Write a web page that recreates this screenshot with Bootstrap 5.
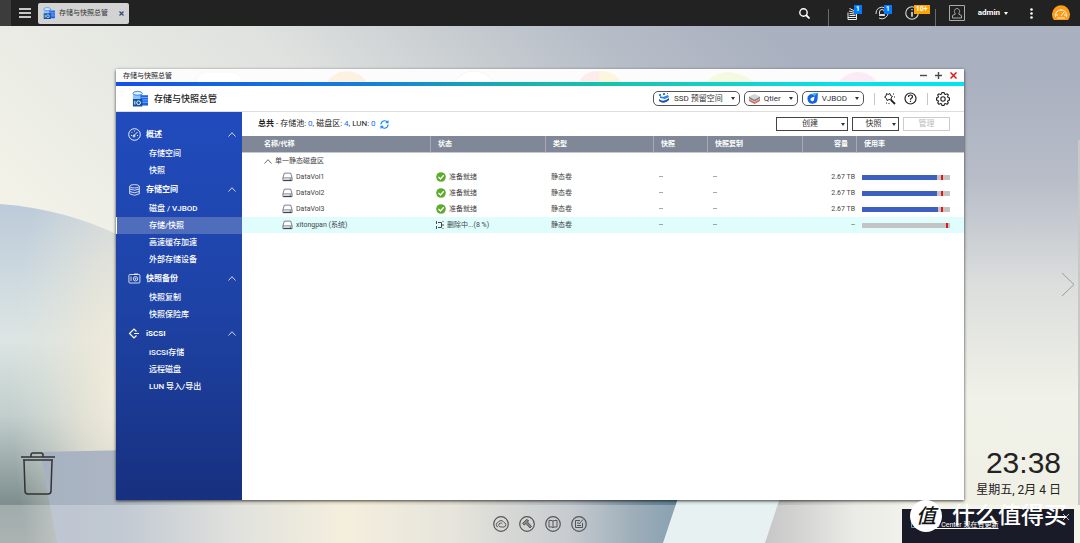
<!DOCTYPE html>
<html lang="zh-CN">
<head>
<meta charset="utf-8">
<meta name="viewport" content="width=device-width, initial-scale=1">
<title>存储与快照总管</title>
<link href="https://cdn.jsdelivr.net/npm/bootstrap@5.3.0/dist/css/bootstrap.min.css" rel="stylesheet">
<style>
body{font-family:Roboto,"Noto Sans CJK SC",sans-serif;font-size:8px;line-height:12px;color:#222;min-height:100vh;background:#f1f1e7;overflow:hidden}
a{color:inherit;text-decoration:none}
svg{display:block;flex:none}
.plain{border:0;background:none;padding:0;color:inherit;font-size:inherit;line-height:inherit}
.fs-s{font-size:7px}
.wall{inset:0;width:100%;height:100%}
.topbar{background:#222;height:26px;color:#fff;padding-right:4px}
.topedge{width:11px;background:#3c3c3c}
.burger{width:27px}
.task{width:91px;height:21px;background:#d3d3d3;color:#333;border-radius:2px;padding:0 5px}
.slot{width:30px;height:26px}
.vbar{width:1px;height:17px;background:#666a78}
.user{margin-left:13px;gap:13px}
.chip{top:5px;left:17px;font-size:7px;line-height:9px;padding:0 2px;background:#007bff;color:#fff;min-width:8px;font-weight:700}
.chip-warn{background:#ffa500}
.win{left:116px;right:116px;top:43px;bottom:43px;background:#fff;box-shadow:0 1px 3px rgba(0,0,0,.75)}
.titlebar{height:13px;padding:0 7px;font-size:7px}
.ribbon{height:4px;background:linear-gradient(90deg,#1450e8,#1680d8 30%,#18b8a8 50%,#18c8b0 62%,#08e0e8 85%,#00e4f4)}
.apphead{height:26px;padding:0 14px 0 16px;border-bottom:1px solid #ddd}
.apptitle{font-size:9px;font-weight:500;margin-left:6px}
.pill{height:15px;border:1px solid #555;border-radius:5px;background:#fff;padding:0 4px;color:#333}
.headrule{width:1px;height:12px;margin:0 8px 0 10px;background:#c8c8b8}
.caret{width:0;height:0;border:2px solid transparent;border-top:3px solid currentColor;border-bottom:0}
.side{width:126px;background:linear-gradient(#214bbd,#1e43a6 50%,#17307f);color:#fff;padding-top:12px;font-weight:500}
.sidehead{height:21px;padding:0 6px 0 12px;font-weight:700;gap:5px}
.sideitem{height:17px;padding-left:33px;line-height:17px}
.sideitem.active{background:#4f6dbb;border-left:1px solid #fff;padding-left:32px}
.tools{height:24px;padding:0 14px 0 16px}
.act{height:14px;border:1px solid #444;background:#fff;font-size:8px;line-height:12px;color:#333;padding:0 2px}
.act:disabled{border-color:#ccc;color:#bbb}
.w-create{width:72px}.w-snap{width:47px}
.grid{table-layout:fixed;width:100%;font-size:7px;line-height:12px;border-collapse:separate;border-spacing:0;color:#444}
.grid th{height:17px;background:#808797;color:#fff;font-weight:700;padding:0 7px;border-left:1px solid #a5aab6;border-bottom:1px solid #c5c8cf}
.grid th:first-child{border-left:0;padding-left:22px}
.grid td{height:16px;padding:0 6px}
.grid tr.sel td{background:#dffdfd}
.grid .num{text-align:right;padding-right:1px}
.grid th.num{padding-right:8px}
.grid td.namecell{padding-left:40px}
.gap-3px{gap:3px}
.c-state{width:115px}.c-type{width:108px}.c-snap{width:54px}.c-rep{width:95px}.c-use{width:108px}
.meter{width:88px;height:5px;background:#c4c4c4}
.meter-fill{height:5px;background:#3c5fc0}
.meter-mark{top:0;width:2px;height:5px;background:#f01010}
.dock{height:38px;background:rgba(255,255,255,.26);gap:10px;color:#555}
.trash{left:20px;bottom:46px}
.nextpage{right:5px;top:246px}
.clockbox{right:19px;bottom:43px;text-align:right;color:#222}
.clock{font:30px/34px "Liberation Sans",sans-serif}
.day{font-size:12px;line-height:20px}
.toastbox{right:6px;bottom:0;width:172px;height:34px;background:#1a1b29;color:#fff}
.toastline{left:9px;top:10px;font-size:7px}
.brandrow{left:8px;top:-9px;gap:10px}
.brandball{width:32px;height:32px;border-radius:50%;background:#fff;color:#151515;font-size:20px;line-height:32px;font-style:italic;font-weight:500}
.brandname{font-size:23px;line-height:30px;font-weight:500}
.scrolledge{right:0;top:114px;width:2px;bottom:38px;background:#c8c9c6}
</style>
</head>
<body class="d-flex flex-column position-relative">
<svg class="d-none">
  <symbol id="i-app" viewBox="0 0 17 17"><path d="M1 3v6l5 2 5-2V3z" fill="#8fc3ff"/><ellipse cx="6" cy="3" rx="5" ry="2" fill="#e8f4ff" stroke="#2a7cf0"/><path d="M9 5h8v11H9z" fill="#1d63e8"/><path d="M10 7.500h7M10 10h7M10 12.500h7" stroke="#7db1ff"/><path d="M1 9h10v8H1z" fill="#10529e"/><path d="M3 11v4" stroke="#fff"/><circle cx="7" cy="13" r="2" fill="none" stroke="#fff"/></symbol>
  <symbol id="i-up" viewBox="0 0 8 5"><path d="M.5 4.500 4 .7l3.500 3.800" fill="none" stroke="currentColor" stroke-width=".8"/></symbol>
  <symbol id="i-disk" viewBox="0 0 12 10"><path d="M1 6 2.500.8h7L11 6v3H1zM1 6h10" fill="#fff" stroke="#667" stroke-width=".9"/><path d="M1.500 8.700h9" stroke="#345" stroke-width="1.300"/><circle cx="9" cy="7.300" r=".6" fill="#345"/></symbol>
  <symbol id="i-ok" viewBox="0 0 10 10"><circle cx="5" cy="5" r="4.800" fill="#5cab2a"/><path d="m2.500 5 2 2 3.200-3.700" fill="none" stroke="#fff" stroke-width="1.400"/></symbol>
</svg>

<svg class="wall position-absolute z-n1" viewBox="0 0 1080 543" preserveAspectRatio="none" aria-hidden="true">
  <defs>
    <linearGradient id="sky" x1="0" y1=".35" x2=".68" y2="0"><stop offset="0" stop-color="#f2f2e8"/><stop offset=".45" stop-color="#dfe2df"/><stop offset=".8" stop-color="#b8bec8"/><stop offset="1" stop-color="#a9b0bf"/></linearGradient>
    <linearGradient id="rgt" x1="0" y1="0" x2="0" y2="1"><stop offset="0" stop-color="#a9b0bf"/><stop offset=".1" stop-color="#a9b0bf"/><stop offset=".3" stop-color="#b8bdc8"/><stop offset=".5" stop-color="#dcdedd"/><stop offset=".72" stop-color="#f0f1e8"/><stop offset="1" stop-color="#f0f0e4"/></linearGradient>
    <linearGradient id="arc" x1="0" y1="0" x2="0" y2="1"><stop offset="0" stop-color="#bccbda"/><stop offset=".4" stop-color="#dce5e3"/><stop offset=".62" stop-color="#c2cfcd"/><stop offset=".88" stop-color="#7f8f8f"/><stop offset="1" stop-color="#8f9898"/></linearGradient>
    <radialGradient id="glow" cx="1" cy=".55" r=".9"><stop offset="0" stop-color="#f3eddc"/><stop offset=".4" stop-color="#ece7d8" stop-opacity=".7"/><stop offset="1" stop-color="#e0e4dc" stop-opacity="0"/></radialGradient>
    <linearGradient id="base" x1="0" x2="1" y1="0" y2="0"><stop offset="0" stop-color="#a6b1c1"/><stop offset=".12" stop-color="#acb6c3"/><stop offset=".3" stop-color="#d7d8d2"/><stop offset=".46" stop-color="#f1e9d1"/><stop offset=".62" stop-color="#dfdcd0"/><stop offset=".8" stop-color="#b4bac0"/><stop offset=".9" stop-color="#7b92a1"/><stop offset="1" stop-color="#527890"/></linearGradient>
    <linearGradient id="fold" x1="0" x2="1" y1="0" y2="0"><stop offset="0" stop-color="#b2b3b3"/><stop offset=".6" stop-color="#e4e4df"/><stop offset="1" stop-color="#f0f0e6"/></linearGradient>
  </defs>
  <path d="M0 0h1080v543H0z" fill="url(#sky)"/>
  <path d="M915 26h165v517H915z" fill="url(#rgt)"/>
  <path d="M0 204Q65 209 120 236V543H0z" fill="url(#arc)"/>
  <path d="M0 204Q65 209 120 236V543H0z" fill="url(#glow)"/>
  <path d="M40 452 130 450 700 490 663 543H57z" fill="url(#base)"/>
  <path d="m678 498-15 45h102l15-45z" fill="#dfecec"/>
  <path d="m780 498-15 45h151v-45z" fill="url(#fold)"/>
</svg>

<header class="topbar d-flex align-items-center">
  <div class="topedge align-self-stretch"></div>
  <button class="plain burger d-flex justify-content-center" aria-label="主菜单"><svg width="12" height="10" viewBox="0 0 12 10"><path d="M0 1h12M0 5h12M0 9h12" stroke="#fff" stroke-width="1.300"/></svg></button>
  <button class="plain task fs-s d-flex align-items-center gap-1"><svg width="12" height="12"><use href="#i-app"/></svg><span>存储与快照总管</span><svg class="ms-auto" width="5" height="5" viewBox="0 0 5 5"><path d="m.5.5 4 4m0-4-4 4" stroke="#2c4d7c" stroke-width="1.200"/></svg></button>
  <button class="plain slot ms-auto d-flex align-items-center justify-content-center" aria-label="搜索"><svg width="11" height="11" viewBox="0 0 11 11"><circle cx="4.500" cy="4.500" r="3.700" fill="none" stroke="#fff" stroke-width="1.400"/><path d="m7 7 3.500 3.500" stroke="#fff" stroke-width="1.800"/></svg></button>
  <div class="vbar align-self-end ms-2 me-2"></div>
  <button class="plain slot position-relative d-flex align-items-center justify-content-center" aria-label="后台任务"><svg width="12" height="13" viewBox="0 0 12 13" fill="none" stroke="#eee"><path d="M2 5.500v7h8.500v-7M2 10.500h8.500M3.500 8.500h6M3.500 6.500l6 .5M3 4l6 1.500M3.500 1.500 9 4"/></svg><span class="chip position-absolute">1</span></button>
  <button class="plain slot position-relative d-flex align-items-center justify-content-center" aria-label="外部设备"><svg width="14" height="14" viewBox="0 0 14 14" fill="none" stroke="#ddd"><path d="M1 8a6 6 0 0 1 9-6M13 6a6 6 0 0 1-9 6M4.500 8.500V6a2.500 2.500 0 0 1 5 0v2.500zM4 9.500h6"/></svg><span class="chip position-absolute">1</span></button>
  <button class="plain slot position-relative d-flex align-items-center justify-content-center" aria-label="事件通知"><svg width="14" height="14" viewBox="0 0 13 13" fill="none" stroke="#ddd"><circle cx="6.500" cy="6.500" r="5.800"/><path d="M6.500 3v1M6.500 5.500v4.500" stroke-width="1.500"/></svg><span class="chip chip-warn position-absolute">10+</span></button>
  <div class="vbar align-self-end ms-2"></div>
  <button class="plain user d-flex align-items-center" aria-label="admin"><svg width="16" height="16" viewBox="0 0 16 16" fill="none" stroke="#aaa"><path d="M.5.5h15v15H.5z"/><path d="M3.500 13v-2.500l3-1.500C4.500 7 5.500 3.500 8 3.500S11.500 7 9.500 9l3 1.500V13z"/></svg><span class="d-flex align-items-center gap-1 fw-bold">admin<i class="caret"></i></span></button>
  <button class="plain slot ms-2 d-flex align-items-center justify-content-center" aria-label="更多"><svg width="3" height="11" viewBox="0 0 3 11" fill="#fff"><circle cx="1.500" cy="1.500" r="1.300"/><circle cx="1.500" cy="5.500" r="1.300"/><circle cx="1.500" cy="9.500" r="1.300"/></svg></button>
  <button class="plain slot d-flex align-items-center justify-content-center" aria-label="仪表板"><svg width="18" height="16" viewBox="0 0 18 16"><path d="M2 15a9 9 0 1 1 14 0z" fill="#ff9b17"/><path d="M3.500 12a5.700 5.700 0 1 1 11 0M9 11l3-4M9 4v2M5 6l1 1M4 10h2M12 10h2M5 13h8" fill="none" stroke="#fff" stroke-width=".9"/></svg></button>
</header>

<main class="flex-grow-1 position-relative d-flex flex-column">
  <div class="scrolledge position-absolute"></div>
  <button class="plain trash position-absolute" aria-label="回收站"><svg width="36" height="46" viewBox="0 0 36 46" fill="none" stroke="#333" stroke-width="1.500"><path d="M1 6h34M11 6V4q0-2 2-2h8q2 0 2 2v2M3 9h30M4 9l1 31q0 3 3 3h20q3 0 3-3l1-31"/></svg></button>
  <button class="plain nextpage position-absolute" aria-label="下一页"><svg width="14" height="25" viewBox="0 0 14 25"><path d="m1 1 12 11.500L1 24" fill="none" stroke="#9b9c9e"/></svg></button>

  <section class="win position-absolute d-flex flex-column">
    <div class="titlebar d-flex align-items-center position-relative">
      <svg class="position-absolute top-0 start-0 w-100 h-100" viewBox="0 0 848 13" preserveAspectRatio="xMidYMin slice" aria-hidden="true"><rect width="848" height="13" fill="#fcfcfc"/><rect x="80" y="3" width="46" height="30" rx="10" fill="#fff" stroke="#f8f8f8"/><circle cx="231" cy="25" r="23" fill="#fdf1e2"/><circle cx="358" cy="25" r="23" fill="#fff" stroke="#f6f6f6"/><path d="M463 13q5-11 20-11v11z" fill="#fcecec"/><path d="M483 2q16 0 22 11h-22z" fill="#fbf6de"/><path d="M590 13q20-20 48 0z" fill="#f4fae2"/><circle cx="742" cy="26" r="23" fill="#faebf6"/></svg>
      <span class="position-relative">存储与快照总管</span>
      <div class="ms-auto d-flex gap-2 position-relative">
        <button class="plain" aria-label="最小化"><svg width="7" height="7" viewBox="0 0 7 7"><path d="M0 3.500h7" stroke="#444b55" stroke-width="1.400"/></svg></button>
        <button class="plain" aria-label="最大化"><svg width="7" height="7" viewBox="0 0 7 7"><path d="M0 3.500h7M3.500 0v7" stroke="#444b55" stroke-width="1.400"/></svg></button>
        <button class="plain" aria-label="关闭"><svg width="7" height="7" viewBox="0 0 7 7"><path d="m.5.5 6 6m0-6-6 6" stroke="#e01818" stroke-width="1.500"/></svg></button>
      </div>
    </div>
    <div class="ribbon"></div>
    <div class="apphead d-flex align-items-center">
      <svg width="16" height="17"><use href="#i-app"/></svg>
      <span class="apptitle">存储与快照总管</span>
      <div class="ms-auto d-flex align-items-center gap-1">
        <button class="pill d-flex align-items-center gap-1"><svg width="12" height="11" viewBox="0 0 12 11"><path d="M1 6q4 4 10-1v2q-5 5-10 1z" fill="#1b4f9c"/><path d="M2 3l3 1 5-2 1 2-4 2-5-1z" fill="#2a86ee"/><path d="M1 1h2v2H1zM5 0h2v2H5zM9 0h1v1H9z" fill="#2a86ee"/></svg><span>SSD 预留空间</span><i class="caret ms-1"></i></button>
        <button class="pill d-flex align-items-center gap-1"><svg width="11" height="10" viewBox="0 0 11 10"><path d="m0 5 5.500 3L11 5v2l-5.500 3L0 7z" fill="#df6a55"/><path d="m0 2.500 5.500 3 5.500-3v2l-5.500 3-5.500-3z" fill="#7b8188"/><path d="m0 2.500 5.500-2.500 5.500 2.500-5.500 3z" fill="#d3d6d9"/></svg><span>Qtier</span><i class="caret ms-1"></i></button>
        <button class="pill d-flex align-items-center gap-1"><svg width="11" height="11" viewBox="0 0 11 11"><path d="M11 0 10.500 6a5 5 0 1 1-6.500-5z" fill="#1763e6"/><path d="M7.500 3.500 7 7a1.800 1.800 0 1 1-2.500-2.200z" fill="#fff"/><path d="M4 1 11 0 7.500 3z" fill="#41b6f7"/></svg><span>VJBOD</span><i class="caret ms-1"></i></button>
      </div>
      <div class="headrule"></div>
      <div class="d-flex align-items-center gap-2">
        <button class="plain" aria-label="工具"><svg width="13" height="13" viewBox="0 0 13 13" fill="none" stroke="#222"><path d="M3.500 1.500 5 2.500l2-1 .5 2 2 1-1.500 1.500.5 2-2.500-.5-2 1-.5-2-2-1.500L3 4z"/><path d="m8 8 4 4" stroke-width="1.800"/><path d="M10 2h1M11 5h1M3 11h1M6 11v1" /></svg></button>
        <button class="plain" aria-label="帮助"><svg width="13" height="13" viewBox="0 0 13 13" fill="none" stroke="#222" stroke-width="1.200"><circle cx="6.500" cy="6.500" r="5.500"/><path d="M4.500 5q0-2 2-2t2 1.700q0 1-1.200 1.500-.8.500-.8 1.500M6.500 8.800v1.200"/></svg></button>
      </div>
      <div class="headrule"></div>
      <button class="plain" aria-label="设置"><svg width="14" height="14" viewBox="0 0 14 14" fill="none" stroke="#222" stroke-width="1.100"><path d="m5.500 2 .5-1.500h2L8.500 2l1 .5 1.500-.7L12.300 3l-.7 1.500.5 1 1.400.5v2l-1.400.5-.5 1 .7 1.500-1.300 1.300-1.500-.7-1 .4-.5 1.500H6L5.500 12l-1-.4-1.500.7L1.700 11l.7-1.500-.4-1L.5 8V6L2 5.500l.4-1L1.700 3 3 1.800l1.500.7z"/><circle cx="7" cy="7" r="2.200"/></svg></button>
    </div>

    <div class="flex-grow-1 d-flex">
      <nav class="side flex-shrink-0">
        <a href="#" class="sidehead d-flex align-items-center"><svg width="13" height="13" viewBox="0 0 13 13" fill="none" stroke="#fff" stroke-width=".9"><circle cx="6.500" cy="6.500" r="5.800"/><path d="m5.500 8 4-4M3 7.500h1M3.500 4l.7.700M6.500 2.500v1M9 7.500h1"/><circle cx="6" cy="8" r="1"/></svg><span>概述</span><svg class="ms-auto" width="8" height="5"><use href="#i-up"/></svg></a>
        <a href="#" class="sideitem d-block">存储空间</a>
        <a href="#" class="sideitem d-block">快照</a>
        <a href="#" class="sidehead d-flex align-items-center"><svg width="13" height="12" viewBox="0 0 13 12" fill="none" stroke="#fff" stroke-width=".8"><ellipse cx="6.500" cy="2.300" rx="4.800" ry="1.700"/><path d="M1.700 2.300v7.500q4.800 3 9.600 0V2.300M1.700 5q4.800 2.500 9.600 0M1.700 7.500q4.800 2.500 9.600 0"/></svg><span>存储空间</span><svg class="ms-auto" width="8" height="5"><use href="#i-up"/></svg></a>
        <a href="#" class="sideitem d-block">磁盘 / VJBOD</a>
        <a href="#" class="sideitem active d-block">存储/快照</a>
        <a href="#" class="sideitem d-block">高速缓存加速</a>
        <a href="#" class="sideitem d-block">外部存储设备</a>
        <a href="#" class="sidehead d-flex align-items-center"><svg width="13" height="11" viewBox="0 0 13 11" fill="none" stroke="#fff" stroke-width=".8"><rect x=".9" y="1.500" width="11" height="8.500" rx="1"/><path d="M3 3.500v4.500M6 1h4"/><circle cx="7.500" cy="5.800" r="2.200"/><circle cx="7.500" cy="5.800" r=".6"/></svg><span>快照备份</span><svg class="ms-auto" width="8" height="5"><use href="#i-up"/></svg></a>
        <a href="#" class="sideitem d-block">快照复制</a>
        <a href="#" class="sideitem d-block">快照保险库</a>
        <a href="#" class="sidehead d-flex align-items-center"><svg width="13" height="11" viewBox="0 0 13 11" fill="none" stroke="#fff" stroke-width="1.200"><path d="M8.500 3.500 6 1 1.500 5.500 6 10l2.500-2.500M6 5.500h5"/></svg><span>iSCSI</span><svg class="ms-auto" width="8" height="5"><use href="#i-up"/></svg></a>
        <a href="#" class="sideitem d-block">iSCSI存储</a>
        <a href="#" class="sideitem d-block">远程磁盘</a>
        <a href="#" class="sideitem d-block">LUN 导入/导出</a>
      </nav>

      <div class="flex-grow-1">
        <div class="tools d-flex align-items-center gap-1">
          <span><b>总共</b> - 存储池: <a href="#" class="text-primary">0</a>, 磁盘区: <a href="#" class="text-primary">4</a>, LUN: <a href="#" class="text-primary">0</a></span>
          <button class="plain" aria-label="刷新"><svg width="9" height="9" viewBox="0 0 9 9" fill="none" stroke="#1684f0" stroke-width="1.100"><path d="M1 4.500A3.500 3.500 0 0 1 7.500 2.500M8 4.500A3.500 3.500 0 0 1 1.500 6.500M8 .5v2.300H5.700M1 8.500V6.200h2.300"/></svg></button>
          <button class="act w-create ms-auto d-flex align-items-center"><span class="flex-grow-1">创建</span><i class="caret"></i></button>
          <button class="act w-snap d-flex align-items-center"><span class="flex-grow-1">快照</span><i class="caret"></i></button>
          <button class="act w-snap" disabled>管理</button>
        </div>
        <table class="grid">
          <colgroup><col><col class="c-state"><col class="c-type"><col class="c-snap"><col class="c-rep"><col class="c-snap"><col class="c-use"></colgroup>
          <thead><tr><th>名称/代称</th><th>状态</th><th>类型</th><th>快照</th><th>快照复制</th><th class="num">容量</th><th>使用率</th></tr></thead>
          <tbody>
            <tr><td colspan="7"><div class="d-flex align-items-center gap-3px ms-3"><svg width="8" height="5"><use href="#i-up"/></svg>单一静态磁盘区</div></td></tr>
            <tr><td class="namecell"><div class="d-flex align-items-center gap-3px"><svg width="11" height="10"><use href="#i-disk"/></svg>DataVol1</div></td><td><div class="d-flex align-items-center gap-3px"><svg width="10" height="10"><use href="#i-ok"/></svg>准备就绪</div></td><td>静态卷</td><td>--</td><td>--</td><td class="num">2.67 TB</td><td><div class="meter position-relative"><div class="meter-fill" style="width:85%"></div><div class="meter-mark position-absolute" style="left:90%"></div></div></td></tr>
            <tr><td class="namecell"><div class="d-flex align-items-center gap-3px"><svg width="11" height="10"><use href="#i-disk"/></svg>DataVol2</div></td><td><div class="d-flex align-items-center gap-3px"><svg width="10" height="10"><use href="#i-ok"/></svg>准备就绪</div></td><td>静态卷</td><td>--</td><td>--</td><td class="num">2.67 TB</td><td><div class="meter position-relative"><div class="meter-fill" style="width:85%"></div><div class="meter-mark position-absolute" style="left:90%"></div></div></td></tr>
            <tr><td class="namecell"><div class="d-flex align-items-center gap-3px"><svg width="11" height="10"><use href="#i-disk"/></svg>DataVol3</div></td><td><div class="d-flex align-items-center gap-3px"><svg width="10" height="10"><use href="#i-ok"/></svg>准备就绪</div></td><td>静态卷</td><td>--</td><td>--</td><td class="num">2.67 TB</td><td><div class="meter position-relative"><div class="meter-fill" style="width:86%"></div><div class="meter-mark position-absolute" style="left:90%"></div></div></td></tr>
            <tr class="sel"><td class="namecell"><div class="d-flex align-items-center gap-3px"><svg width="11" height="10"><use href="#i-disk"/></svg>xitongpan (系统)</div></td><td><div class="d-flex align-items-center gap-3px"><svg width="8" height="8" viewBox="0 0 8 8" fill="none" stroke="#333"><path d="M.5 0v3M.5 5v3M2 1.500h3.500v5H2M7 0v1M7 3v2M7 7v1" stroke-width=".9"/></svg>删除中...(8 %)</div></td><td>静态卷</td><td>--</td><td>--</td><td class="num">--</td><td><div class="meter position-relative"><div class="meter-mark position-absolute" style="left:96%"></div></div></td></tr>
          </tbody>
        </table>
      </div>
    </div>
  </section>

  <div class="clockbox position-absolute"><div class="clock">23:38</div><div class="day">星期五, 2月 4 日</div></div>

  <footer class="dock mt-auto d-flex align-items-center justify-content-center">
    <button class="plain" aria-label="云端"><svg width="16" height="16" viewBox="0 0 16 16" fill="none" stroke="currentColor"><circle cx="8" cy="8" r="7.300" stroke-width="1.200"/><path d="M5 11a2.300 2.300 0 0 1 0-4.500 3.300 3.300 0 0 1 6 0 2.300 2.300 0 0 1 0 4.500H8a2 2 0 1 1 1.500-3"/></svg></button>
    <button class="plain" aria-label="工具"><svg width="16" height="16" viewBox="0 0 16 16" fill="none" stroke="currentColor"><circle cx="8" cy="8" r="7.300" stroke-width="1.200"/><path d="M3.500 7.500 7.500 3.500l2 1-1 1.500 4 4.500-1.500 1.500-4-4.500-1.500 1.500z" fill="#8b8b88"/></svg></button>
    <button class="plain" aria-label="手册"><svg width="16" height="16" viewBox="0 0 16 16" fill="none" stroke="currentColor"><circle cx="8" cy="8" r="7.300" stroke-width="1.200"/><path d="M8 5v6.500M8 5Q6 4 4 4.500v6.500q2-.5 4 .5 2-1 4-.5V4.500Q10 4 8 5z"/></svg></button>
    <button class="plain" aria-label="反馈"><svg width="16" height="16" viewBox="0 0 16 16" fill="none" stroke="currentColor"><circle cx="8" cy="8" r="7.300" stroke-width="1.200"/><path d="M9 4.500H4.500v7h7V7M8 8l4-4.500M6 7h2M6 9.500h4"/></svg></button>
  </footer>

  <aside class="toastbox position-absolute">
    <a href="#" class="toastline position-absolute text-nowrap d-flex gap-1"><svg width="8" height="10" viewBox="0 0 8 10"><path d="M.5 1.500h7v7h-7z" fill="none" stroke="#5ba8b8"/></svg><span class="text-decoration-underline ms-1">App Center 现在有更新</span></a>
    <button class="plain position-absolute top-0 end-0 mt-1 me-1" aria-label="关闭提示"><svg width="8" height="8" viewBox="0 0 8 8"><path d="m1 1 6 6m0-6-6 6" stroke="#bbb"/></svg></button>
    <div class="brandrow position-absolute d-flex align-items-center text-nowrap"><span class="brandball text-center">值</span><span class="brandname">什么值得买</span></div>
  </aside>
</main>
<script src="https://cdn.jsdelivr.net/npm/bootstrap@5.3.0/dist/js/bootstrap.bundle.min.js"></script>
</body>
</html>
